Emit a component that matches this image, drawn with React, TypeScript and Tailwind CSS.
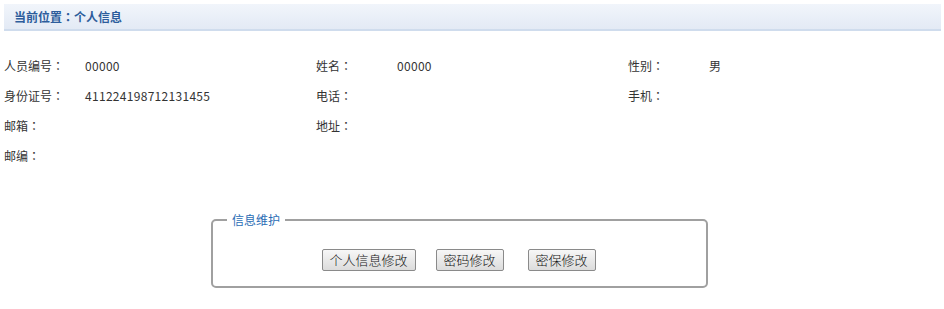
import React from "react";

const rows: [string, string, string, string, string, string][] = [
  ["人员编号", "00000", "姓名", "00000", "性别", "男"],
  ["身份证号", "411224198712131455", "电话", "", "手机", ""],
  ["邮箱", "", "地址", "", "", ""],
  ["邮编", "", "", "", "", ""],
];

function Colon() {
  return <span style={{ fontFamily: '"Noto Sans CJK TC", sans-serif' }}>：</span>;
}

function Cell({ label, value }: { label: string; value: string }) {
  return (
    <div className="flex w-[312px] items-center">
      <span className="w-[81px]">
        {label ? (
          <>
            {label}
            <Colon />
          </>
        ) : null}
      </span>
      <span className="tracking-[0.3px]">{value}</span>
    </div>
  );
}

function Btn({ children, className = "" }: { children: React.ReactNode; className?: string }) {
  return (
    <button
      className={`h-[22px] rounded-[2px] border border-[#8a8a8a] bg-gradient-to-b from-[#f7f7f7] to-[#dcdcdc] px-0 text-[13px] leading-[20px] font-light text-[#111] ${className}`}
    >
      {children}
    </button>
  );
}

export default function App() {
  return (
    <div
      className="w-[944px] h-[309px] bg-white text-[12px] text-[#333]"
      style={{ fontFamily: '"Microsoft YaHei", "Noto Sans CJK SC", "Liberation Sans", sans-serif' }}
    >
      <div className="pt-[4px] pl-[4px] pr-[3px]">
        <div className="h-[27px] flex items-center pl-[10px] bg-gradient-to-b from-[#f1f5fb] to-[#e3eaf5] border-b-2 border-[#cfdced] font-bold text-[#2d5d9c]">
          当前位置
          <Colon />
          个人信息
        </div>
      </div>
      <div className="mt-[20px] pl-[4px]">
        {rows.map((r, i) => (
          <div key={i} className="flex h-[30px]">
            <Cell label={r[0]} value={r[1]} />
            <Cell label={r[2]} value={r[3]} />
            <Cell label={r[4]} value={r[5]} />
          </div>
        ))}
      </div>
      <fieldset className="ml-[211px] mt-[42px] w-[497px] h-[75px] rounded-[5px] border-2 border-[#a0a0a0] px-0 pb-0">
        <legend className="ml-[14px] px-[5px] text-[12px] leading-[14px] text-[#2a6db5]">信息维护</legend>
        <div className="flex justify-center pt-[22px] pr-[2px]">
          <Btn className="w-[94px] mr-[20px]">个人信息修改</Btn>
          <Btn className="w-[68px] mr-[24px]">密码修改</Btn>
          <Btn className="w-[68px]">密保修改</Btn>
        </div>
      </fieldset>
    </div>
  );
}
